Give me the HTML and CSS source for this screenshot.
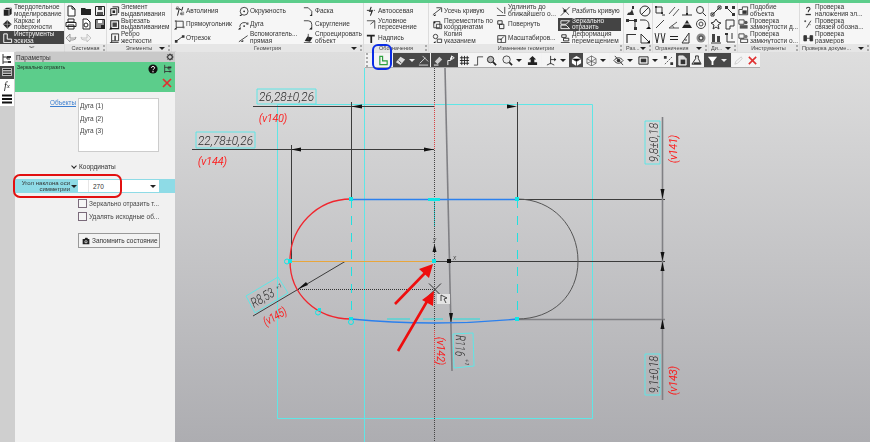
FILE: index.html
```html
<!DOCTYPE html>
<html lang="ru">
<head>
<meta charset="utf-8">
<title>Зеркально отразить</title>
<link rel="stylesheet" href="styles.css">
</head>
<body>
<svg class="defs" width="0" height="0">
  <defs>
    <g id="solid"><path d="M2 4l3-2h6v7l-3 2H2z" fill="#222"/><path d="M2 4h6v7M8 4l3-2" stroke="#fff" fill="none" stroke-width=".7"/></g>
    <g id="surf"><path d="M6 1l5 5-5 5-5-5z" fill="#222"/><path d="M1 6h10M6 1v10" stroke="#aaa" stroke-width=".8"/></g>
    <g id="sketch"><path d="M2 1v10h9V7H6V1z" fill="none" stroke="#fff" stroke-width="1.1"/></g>
    <g id="doc"><path d="M3 1h4l3 3v7H3zM7 1v3h3" fill="#fff" stroke="#222"/></g>
    <g id="folder"><path d="M1 10V3h4l1 1h5v6z" fill="#222"/></g>
    <g id="save"><path d="M1.500 1.500h9v9h-9z" fill="#eee" stroke="#222"/><path d="M4 2h4v3H4zM3 7h6v3H3z" fill="#555"/></g>
    <g id="print"><path d="M3 1h6v3H3zM1 4.500h10v4H1zM3 7h6v4H3z" fill="#fff" stroke="#222"/></g>
    <g id="docsearch"><path d="M3 1h4l3 3v7H3z" fill="#fff" stroke="#222"/><circle cx="6" cy="7" r="2" fill="none" stroke="#222"/></g>
    <g id="saveas"><path d="M1.500 1.500h9v9h-9z" fill="#888" stroke="#222"/><path d="M4 2h4v3H4z" fill="#fff"/><path d="M7 7h4v4H7z" fill="#222"/></g>
    <g id="undo"><path d="M5 2L1 6l4 4V8h3a3 3 0 0 0 3-3c-1 1-2 1-3 1H5z" fill="#e8e8e8" stroke="#888" stroke-width=".8"/></g>
    <g id="redo"><path d="M7 2l4 4-4 4V8H4a3 3 0 0 1-3-3c1 1 2 1 3 1h3z" fill="#eee" stroke="#bbb" stroke-width=".8"/></g>
    <g id="extrude"><path d="M4 1h7v7M2 3h7v7H2z" fill="none" stroke="#222" stroke-width="1.100"/><path d="M4 5h3v3H4z" fill="#222"/><path d="M0 12l3-3v3z" fill="#111"/></g>
    <g id="cut"><path d="M2 2h9v9H2z" fill="none" stroke="#222" stroke-width="1.200"/><path d="M4 4h5v5H4z" fill="#444"/><path d="M0 12l3-3v3z" fill="#111"/></g>
    <g id="rib"><path d="M3 1h8v8H3zM1 11h10M3 9v2" fill="none" stroke="#222"/><path d="M6 3v6h2V3z" fill="#555"/></g>
    <g id="autoline"><path d="M4 11l2-8 3 2 1-4M2 3h3M7 9h3" fill="none" stroke="#222" stroke-width="1.100"/><path d="M3 1h2v3H3zM8 7h3v3H8z" fill="none" stroke="#666" stroke-width=".8"/></g>
    <g id="rectg"><path d="M2.500 2.500h8v7h-8z" fill="none" stroke="#333"/><path d="M1 1.500h2v2H1zM10 8.500h2v2h-2z" fill="#666"/><path d="M0 12l3-3v3z" fill="#111"/></g>
    <g id="lineg"><path d="M3 9l7-5" stroke="#333"/><path d="M1 8h3v3H1zM9 2.500h3v3H9z" fill="#333"/></g>
    <g id="circ"><circle cx="7" cy="6" r="4.500" fill="none" stroke="#333"/><circle cx="7" cy="6" r="1" fill="#222"/><path d="M1 12l3-3v3z" fill="#111"/></g>
    <g id="arcg"><path d="M2 9a5 5 0 0 1 9-3" fill="none" stroke="#333"/><circle cx="7" cy="8" r="1" fill="#222"/><path d="M9.500 4h2.500v2.500H9.500z" fill="#666"/><path d="M0 12l3-3v3z" fill="#111"/></g>
    <g id="aux"><path d="M1 10l10-7" stroke="#333"/><path d="M3 10l3-2v2z" fill="#111"/></g>
    <g id="chamf"><path d="M1 2h5l4 4v6" fill="none" stroke="#333"/><path d="M7 12l3-3v3z" fill="#111"/></g>
    <g id="fillet"><path d="M1 2h5a4 4 0 0 1 4 4v6" fill="none" stroke="#333"/><path d="M7 12l3-3v3z" fill="#111"/></g>
    <g id="proj"><path d="M2 9l3-5 6 1-3 5z" fill="#222"/><path d="M6 1v7M1 11h9" stroke="#444"/></g>
    <g id="axis"><path d="M6 1L4 6h3l-2 5" stroke="#222" fill="none" stroke-width="1.200"/><path d="M1 5h9" stroke="#222" stroke-dasharray="3 1"/></g>
    <g id="inter"><path d="M1 2h9l-5 4M10 2v9" fill="none" stroke="#444"/></g>
    <g id="tchar"><path d="M1 2h9v2H7v8H5V4H1z" fill="#222"/></g>
    <g id="trim"><path d="M1 10l9-7M5 2h6v5" fill="none" stroke="#333"/><path d="M1 12l3-3v3z" fill="#111"/></g>
    <g id="move"><path d="M2 3h7v7H2zM5 6h6v5H5z" fill="none" stroke="#333"/><circle cx="3" cy="4" r="1" fill="#222"/></g>
    <g id="copyi"><circle cx="4" cy="4" r="2.500" fill="none" stroke="#333"/><path d="M6 7h5v4H6z" fill="none" stroke="#333"/><path d="M1 12l3-3v3z" fill="#111"/></g>
    <g id="ext"><path d="M1 2l7 6M10 1v8M1 11h10" fill="none" stroke="#333"/></g>
    <g id="rot"><path d="M2 2h5v4H2zM4 6h5v5H4z" fill="none" stroke="#222"/></g>
    <g id="scale"><path d="M2 3h9v8H2zM2 7h4v4" fill="none" stroke="#333"/><path d="M5 8l4-4" stroke="#222"/></g>
    <g id="split"><path d="M1 11L11 1M3 2l7 8" stroke="#333" fill="none"/><path d="M4 4h3v3H4z" fill="#222"/></g>
    <g id="mirror"><path d="M1 2h10L7 6H1zM1 11h10L7 7H1z" fill="none" stroke="#fff"/></g>
    <g id="deform"><path d="M2 2h5v3H2zM4 6h6v3H4z" fill="none" stroke="#222"/><path d="M1 11h10" stroke="#222"/></g>
    <g id="a1"><path d="M2 10c2-5 3 0 5-6l2 6zM7 1h2v3H7z" fill="#333"/></g>
    <g id="a2"><circle cx="6" cy="6" r="5" fill="none" stroke="#333"/><path d="M2 10l8-8" stroke="#333"/></g>
    <g id="a3"><path d="M2 2.500h8v8" fill="none" stroke="#333"/><path d="M1 1h3v3H1zM9 1h3v3H9zM9 9h3v3H9z" fill="#333"/></g>
    <g id="a4"><path d="M1 2h4c4 0 5 3 5 6" fill="none" stroke="#333"/><path d="M7 11l3-3 2 3z" fill="#111"/></g>
    <g id="a5"><path d="M2 11V2.500h9" fill="none" stroke="#333" stroke-width="1.200"/></g>
    <g id="a6"><path d="M2 2v9h9z" fill="none" stroke="#333"/><path d="M8 11l3-3v3z" fill="#111"/></g>
    <g id="c1"><path d="M2 2h6v6H2z" fill="none" stroke="#333"/><path d="M1 1h2v2H1zM7 7h2v2H7z" fill="#333"/><path d="M8 10h3" stroke="#333"/></g>
    <g id="c2"><path d="M1 9l6-7M5 11l6-7" stroke="#555"/></g>
    <g id="c3"><path d="M6 1v9M1 10h10" stroke="#333"/><path d="M5 8l2 0 0 2H5z" fill="#222"/></g>
    <g id="c4"><circle cx="5" cy="5" r="3.500" fill="none" stroke="#333"/><path d="M8 8l3 3" stroke="#333"/></g>
    <g id="c5"><path d="M2 10l8-8" stroke="#444"/></g>
    <g id="c6"><path d="M1 10h10M1 10l8-6M4 7l2 3" fill="none" stroke="#555"/></g>
    <g id="c7"><path d="M6 2l5 8H1z" fill="#222"/><path d="M3 6h6" stroke="#eee"/></g>
    <g id="c8"><circle cx="6" cy="6" r="4.500" fill="none" stroke="#444"/><circle cx="6" cy="6" r="2" fill="none" stroke="#444"/></g>
    <g id="c9"><path d="M1 1l2 10 2-10M7 1l2 10 2-10" fill="none" stroke="#333"/></g>
    <g id="c10"><path d="M2 4.500h8M2 7.500h8" stroke="#222" stroke-width="1.200"/></g>
    <g id="c11"><path d="M1 11L8 1v10zM4 8h2" fill="none" stroke="#333"/></g>
    <g id="c12"><circle cx="6" cy="6" r="4.500" fill="#888"/><circle cx="6" cy="6" r="2" fill="#eee" stroke="#333"/></g>
    <g id="d1"><path d="M2 10l8-8" stroke="#333"/><path d="M1 8h3v3H1zM8 1h3v3H8z" fill="none" stroke="#333"/></g>
    <g id="d2"><path d="M3 3l7 7" stroke="#333"/><path d="M1 1h3v3H1zM8 8h3v3H8zM8 1h3v3H8z" fill="#333"/></g>
    <g id="d3"><path d="M6 1l2 3 3 1-3 2 1 4-3-2-3 2 1-4-3-2 3-1z" fill="none" stroke="#333"/></g>
    <g id="d4"><path d="M2 2h8v6H6v3H2z" fill="none" stroke="#333"/></g>
    <g id="d5"><path d="M2 2h3v8H2zM7 4h3v6H7z" fill="#444"/><path d="M1 11h10" stroke="#333"/></g>
    <g id="d6"><path d="M3 1v9h8M8 1v6" stroke="#333" fill="none"/><path d="M1 1h3v2H1z" fill="#333"/></g>
    <g id="simil"><path d="M1 4h4V1h6v9H1z" fill="none" stroke="#333"/><path d="M5 5h5v4H5z" fill="#333"/></g>
    <g id="chk1"><path d="M1 1h6v5H1z" fill="none" stroke="#333"/><path d="M2 7h9v4H2z" fill="#555"/><circle cx="9" cy="4" r="2" fill="#555"/></g>
    <g id="chk2"><path d="M1 1h6v5H1z" fill="none" stroke="#333"/><path d="M3 7h8v4H3z" fill="none" stroke="#333"/><circle cx="9" cy="4" r="2" fill="#777"/></g>
    <g id="chkq"><path d="M4 3c0-2 4-2 4 0 0 2-2 1-2 4" fill="none" stroke="#333" stroke-width="1.200"/><path d="M3 9h6v1.500H3z" fill="#333"/></g>
    <g id="chkl"><path d="M2 2h1v1H2zM9 2l-5 8M8 6v1" stroke="#333" fill="none"/></g>
    <g id="chkr"><path d="M1 3v6h3V3zM8 3v6h3V3zM4 6h4" fill="#333" stroke="#333"/></g>
    <g id="tree"><path d="M2 1v10M2 4h4v2H9M2 9h6" fill="none" stroke="#333"/><path d="M6 3h4v2H6zM7 8h3v2H7z" fill="#333"/></g>
    <g id="treeg"><path d="M2 1.500h3v5h5v4H2z" fill="none" stroke="#2e9e3e" stroke-width="1.300"/></g>
    <g id="eraser"><path d="M1 8l5-6 5 3-5 6z" fill="#ddd"/><path d="M4 6l3 3" stroke="#444"/></g>
    <g id="dim"><path d="M2 9l6-6M5 1l6 6M1 11h10" stroke="#ddd" fill="none"/></g>
    <g id="dim2"><path d="M2 7l5-5 3 3-5 5z" fill="#ccc"/><path d="M1 11h5" stroke="#fff"/></g>
    <g id="sk2"><path d="M2 11V6h3V3h2M6 1l3 2-3 2z" fill="none" stroke="#fff"/></g>
    <g id="grid"><path d="M3 1v10M6 1v10M9 1v10M1 3h10M1 6h10M1 9h10" stroke="#222"/></g>
    <g id="step"><path d="M1 11h4V2h6" fill="none" stroke="#444"/></g>
    <g id="lens"><circle cx="5" cy="5" r="3.500" fill="#bbb" stroke="#222"/><path d="M7.500 7.500l3.500 3.500" stroke="#222" stroke-width="1.800"/></g>
    <g id="lens2"><circle cx="5" cy="5" r="4" fill="#eee" stroke="#444"/><path d="M8 8l3 3" stroke="#222" stroke-width="1.800"/></g>
    <g id="up"><path d="M6 1l4 4H8v3h3v3H1V8h3V5H2z" fill="#222"/></g>
    <g id="fig"><path d="M5 1v9M1 11l4-2 4 2M5 5h6" fill="none" stroke="#333"/><path d="M9 3l2 2-2 2z" fill="#222"/></g>
    <g id="cube"><path d="M6 1l5 3v5l-5 3-5-3V4z" fill="#fff"/><path d="M1 4l5 3 5-3M6 7v5" stroke="#444"/></g>
    <g id="wire"><path d="M6 1l5 3v5l-5 3-5-3V4zM1 4l5 3 5-3M6 7v5M6 1v6M1 9l5-2 5 2" fill="none" stroke="#444" stroke-width=".7"/></g>
    <g id="eye"><path d="M1 6c3-4 7-4 10 0-3 4-7 4-10 0z" fill="none" stroke="#333"/><circle cx="6" cy="6" r="2" fill="#333"/><path d="M2 1l9 10" stroke="#333"/></g>
    <g id="frame"><path d="M1 2h10v8H1z" fill="none" stroke="#222"/><path d="M3 4h6v4H3z" fill="#333"/></g>
    <g id="cam"><path d="M1 3h3l1-2h3l1 2h2v8H1z" fill="#222"/><circle cx="6" cy="7" r="2.300" fill="#ddd"/><circle cx="6" cy="7" r="1.100" fill="#222"/></g>
    <g id="pts"><path d="M2 10l8-8" stroke="#555" stroke-dasharray="2 1"/><path d="M1 1h3v3H1zM8 8h3v3H8z" fill="#333"/></g>
    <g id="layer2"><path d="M2 1h5l3 3v7H2z" fill="#ddd" stroke="#eee"/><path d="M4 5h5v5H4z" fill="#333"/></g>
    <g id="layer3"><path d="M5 1v3L1 10h10L8 4V1z" fill="#eee" stroke="#222"/><path d="M3 8h7v2H3z" fill="#333"/></g>
    <g id="funnel"><path d="M1 2h10L7 7v4H5V7z" fill="#fff"/></g>
    <g id="pen"><path d="M2 10l1-3 6-5 1 2-5 5z" fill="none" stroke="#ccc"/></g>
    <g id="redx"><path d="M2 2l8 8M10 2l-8 8" stroke="#e03030" stroke-width="1.700"/></g>
    <g id="gear"><circle cx="6" cy="6" r="3.500" fill="none" stroke="#333" stroke-width="1.800"/><path d="M6 .5v2M6 9.500v2M.5 6h2M9.500 6h2M2 2l1.500 1.500M8.500 8.500L10 10M2 10l1.500-1.500M8.500 3.500L10 2" stroke="#333"/></g>
    <g id="help"><circle cx="6" cy="6" r="5.500" fill="#111"/><path d="M4 4.500c0-2 4-2 4 0 0 1.500-2 1.300-2 3" fill="none" stroke="#fff" stroke-width="1.200"/><circle cx="6" cy="9.300" r=".8" fill="#fff"/></g>
    <g id="list"><path d="M1 2h10v8H1z" fill="#bbb"/><path d="M2 3.500h8M2 6h8M2 8.500h8" stroke="#222"/></g>
    <g id="burger"><path d="M1 2.500h10M1 6h10M1 9.500h10" stroke="#111" stroke-width="1.800"/></g>
  </defs>
</svg>

<div class="app">
  <div class="topline"></div>
  <header class="ribbon">
    <section class="group g-mode">
      <div class="grp-body one">
        <div class="item"><svg class="ic" viewBox="0 0 12 12"><use href="#solid"/></svg><span>Твердотельное<br>моделирование</span></div>
        <div class="item"><svg class="ic" viewBox="0 0 12 12"><use href="#surf"/></svg><span>Каркас и<br>поверхности</span></div>
        <div class="item dark"><svg class="ic" viewBox="0 0 12 12"><use href="#sketch"/></svg><span>Инструменты<br>эскиза</span></div>
      </div>
      <div class="grp-label">︾</div>
    </section>
    <section class="group g-sys">
      <div class="grp-body icons three">
        <svg class="ic" viewBox="0 0 12 12"><use href="#doc"/></svg><svg class="ic" viewBox="0 0 12 12"><use href="#folder"/></svg><svg class="ic" viewBox="0 0 12 12"><use href="#save"/></svg>
        <svg class="ic" viewBox="0 0 12 12"><use href="#print"/></svg><svg class="ic" viewBox="0 0 12 12"><use href="#docsearch"/></svg><svg class="ic" viewBox="0 0 12 12"><use href="#saveas"/></svg>
        <svg class="ic" viewBox="0 0 12 12"><use href="#undo"/></svg><svg class="ic" viewBox="0 0 12 12"><use href="#redo"/></svg>
      </div>
      <div class="grp-label">Системная<i class="grip"></i></div>
    </section>
    <section class="group g-el">
      <div class="grp-body one">
        <div class="item"><svg class="ic" viewBox="0 0 12 12"><use href="#extrude"/></svg><span>Элемент<br>выдавливания</span></div>
        <div class="item"><svg class="ic" viewBox="0 0 12 12"><use href="#cut"/></svg><span>Вырезать<br>выдавливанием</span></div>
        <div class="item"><svg class="ic" viewBox="0 0 12 12"><use href="#rib"/></svg><span>Ребро<br>жесткости</span></div>
      </div>
      <div class="grp-label">Элементы<i class="tri"></i><i class="grip"></i></div>
    </section>
    <section class="group g-geo">
      <div class="grp-body cols">
        <div class="item"><svg class="ic" viewBox="0 0 12 12"><use href="#autoline"/></svg><span>Автолиния</span></div>
        <div class="item"><svg class="ic" viewBox="0 0 12 12"><use href="#rectg"/></svg><span>Прямоугольник</span></div>
        <div class="item"><svg class="ic" viewBox="0 0 12 12"><use href="#lineg"/></svg><span>Отрезок</span></div>
        <div class="item"><svg class="ic" viewBox="0 0 12 12"><use href="#circ"/></svg><span>Окружность</span></div>
        <div class="item"><svg class="ic" viewBox="0 0 12 12"><use href="#arcg"/></svg><span>Дуга</span></div>
        <div class="item"><svg class="ic" viewBox="0 0 12 12"><use href="#aux"/></svg><span>Вспомогатель...<br>прямая</span></div>
        <div class="item"><svg class="ic" viewBox="0 0 12 12"><use href="#chamf"/></svg><span>Фаска</span></div>
        <div class="item"><svg class="ic" viewBox="0 0 12 12"><use href="#fillet"/></svg><span>Скругление</span></div>
        <div class="item"><svg class="ic" viewBox="0 0 12 12"><use href="#proj"/></svg><span>Спроецировать<br>объект</span></div>
      </div>
      <div class="grp-label">Геометрия<i class="tri"></i><i class="grip"></i></div>
    </section>
    <section class="group g-note">
      <div class="grp-body one">
        <div class="item"><svg class="ic" viewBox="0 0 12 12"><use href="#axis"/></svg><span>Автоосевая</span></div>
        <div class="item"><svg class="ic" viewBox="0 0 12 12"><use href="#inter"/></svg><span>Условное<br>пересечение</span></div>
        <div class="item"><svg class="ic" viewBox="0 0 12 12"><use href="#tchar"/></svg><span>Надпись</span></div>
      </div>
      <div class="grp-label">Обозначения<i class="grip"></i></div>
    </section>
    <section class="group g-mod">
      <div class="grp-body cols">
        <div class="item"><svg class="ic" viewBox="0 0 12 12"><use href="#trim"/></svg><span>Усечь кривую</span></div>
        <div class="item"><svg class="ic" viewBox="0 0 12 12"><use href="#move"/></svg><span>Переместить по<br>координатам</span></div>
        <div class="item"><svg class="ic" viewBox="0 0 12 12"><use href="#copyi"/></svg><span>Копия<br>указанием</span></div>
        <div class="item"><svg class="ic" viewBox="0 0 12 12"><use href="#ext"/></svg><span>Удлинить до<br>ближайшего о...</span></div>
        <div class="item"><svg class="ic" viewBox="0 0 12 12"><use href="#rot"/></svg><span>Повернуть</span></div>
        <div class="item"><svg class="ic" viewBox="0 0 12 12"><use href="#scale"/></svg><span>Масштабиров...</span></div>
        <div class="item"><svg class="ic" viewBox="0 0 12 12"><use href="#split"/></svg><span>Разбить кривую</span></div>
        <div class="item dark"><svg class="ic" viewBox="0 0 12 12"><use href="#mirror"/></svg><span>Зеркально<br>отразить</span></div>
        <div class="item"><svg class="ic" viewBox="0 0 12 12"><use href="#deform"/></svg><span>Деформация<br>перемещением</span></div>
      </div>
      <div class="grp-label">Изменение геометрии<i class="grip"></i></div>
    </section>
    <section class="group g-raz">
      <div class="grp-body icons two">
        <svg class="ic" viewBox="0 0 12 12"><use href="#a1"/></svg><svg class="ic" viewBox="0 0 12 12"><use href="#a2"/></svg>
        <svg class="ic" viewBox="0 0 12 12"><use href="#a3"/></svg><svg class="ic" viewBox="0 0 12 12"><use href="#a4"/></svg>
        <svg class="ic" viewBox="0 0 12 12"><use href="#a5"/></svg><svg class="ic" viewBox="0 0 12 12"><use href="#a6"/></svg>
      </div>
      <div class="grp-label lbl-left">Раз...<i class="tri"></i><i class="grip"></i></div>
    </section>
    <section class="group g-con">
      <div class="grp-body icons four">
        <svg class="ic" viewBox="0 0 12 12"><use href="#c1"/></svg><svg class="ic" viewBox="0 0 12 12"><use href="#c2"/></svg><svg class="ic" viewBox="0 0 12 12"><use href="#c3"/></svg><svg class="ic" viewBox="0 0 12 12"><use href="#c4"/></svg>
        <svg class="ic" viewBox="0 0 12 12"><use href="#c5"/></svg><svg class="ic" viewBox="0 0 12 12"><use href="#c6"/></svg><svg class="ic" viewBox="0 0 12 12"><use href="#c7"/></svg><svg class="ic" viewBox="0 0 12 12"><use href="#c8"/></svg>
        <svg class="ic" viewBox="0 0 12 12"><use href="#c9"/></svg><svg class="ic" viewBox="0 0 12 12"><use href="#c10"/></svg><svg class="ic" viewBox="0 0 12 12"><use href="#c11"/></svg><svg class="ic" viewBox="0 0 12 12"><use href="#c12"/></svg>
      </div>
      <div class="grp-label lbl-left">Ограничения<i class="tri"></i><i class="grip"></i></div>
    </section>
    <section class="group g-di">
      <div class="grp-body icons two">
        <svg class="ic" viewBox="0 0 12 12"><use href="#d1"/></svg><svg class="ic" viewBox="0 0 12 12"><use href="#d2"/></svg>
        <svg class="ic" viewBox="0 0 12 12"><use href="#d3"/></svg><svg class="ic" viewBox="0 0 12 12"><use href="#d4"/></svg>
        <svg class="ic" viewBox="0 0 12 12"><use href="#d5"/></svg><svg class="ic" viewBox="0 0 12 12"><use href="#d6"/></svg>
      </div>
      <div class="grp-label lbl-left">Ди...<i class="tri"></i><i class="grip"></i></div>
    </section>
    <section class="group g-tool">
      <div class="grp-body one">
        <div class="item"><svg class="ic" viewBox="0 0 12 12"><use href="#simil"/></svg><span>Подобие<br>объекта</span></div>
        <div class="item"><svg class="ic" viewBox="0 0 12 12"><use href="#chk1"/></svg><span>Проверка<br>замкнутости д...</span></div>
        <div class="item"><svg class="ic" viewBox="0 0 12 12"><use href="#chk2"/></svg><span>Проверка<br>замкнутости о...</span></div>
      </div>
      <div class="grp-label">Инструменты<i class="grip"></i></div>
    </section>
    <section class="group g-check">
      <div class="grp-body one">
        <div class="item"><svg class="ic" viewBox="0 0 12 12"><use href="#chkq"/></svg><span>Проверка<br>наложения эл...</span></div>
        <div class="item"><svg class="ic" viewBox="0 0 12 12"><use href="#chkl"/></svg><span>Проверка<br>связей обозна...</span></div>
        <div class="item"><svg class="ic" viewBox="0 0 12 12"><use href="#chkr"/></svg><span>Проверка<br>размеров</span></div>
      </div>
      <div class="grp-label lbl-left">Проверка докуме...<i class="tri"></i><i class="grip"></i></div>
    </section>
  </header>

  <main class="main">
    <nav class="tabs">
      <div class="tab"><svg class="ic" viewBox="0 0 12 12"><use href="#tree"/></svg></div>
      <div class="tab on"><svg class="ic" viewBox="0 0 12 12"><use href="#list"/></svg></div>
      <div class="tab fx">f<sub>x</sub></div>
      <div class="tab"><svg class="ic" viewBox="0 0 12 12"><use href="#burger"/></svg></div>
    </nav>
    <aside class="panel">
      <div class="panel-head"><span>Параметры</span><svg class="ic-s" viewBox="0 0 12 12"><use href="#gear"/></svg></div>
      <div class="panel-green">
        <span class="pg-title">Зеркально отразить</span>
        <div class="pg-tools">
          <div class="pg-row"><svg class="ic" viewBox="0 0 12 12"><use href="#help"/></svg><svg class="ic" viewBox="0 0 12 12"><use href="#tree"/></svg></div>
          <svg class="ic pg-x" viewBox="0 0 12 12"><use href="#redx"/></svg>
        </div>
      </div>
      <div class="objects">
        <a class="obj-link">Объекты</a>
        <div class="obj-list"><div>Дуга (1)</div><div>Дуга (2)</div><div>Дуга (3)</div></div>
      </div>
      <div class="coord-head"><i class="chev"></i>Координаты</div>
      <div class="angle-row">
        <div class="angle-label"><span>Угол наклона оси симметрии</span><i class="tri"></i></div>
        <div class="angle-input"><b class="ai-pad"></b><span>270</span><i class="tri"></i></div>
      </div>
      <label class="check"><i class="box"></i>Зеркально отразить т...</label>
      <label class="check"><i class="box"></i>Удалять исходные об...</label>
      <div class="save-btn"><svg class="ic-s" viewBox="0 0 12 12"><use href="#cam"/></svg>Запомнить состояние</div>
      <div class="red-outline"></div>
    </aside>
    <section class="canvas">
      <svg class="drawing" viewBox="175 52 695 390">
        <g class="cy" fill="none">
          <path d="M277.500 104.500H592.500V418.500H277.500z"/>
          <path d="M364.500 68V442"/>
          <path d="M257 89h59v15h-59zM196 132h59v16h-59zM645 121h15v43h-15zM645 354h15v41h-15z"/>
          <path d="M246 296l32-19 10 16-33 20zM453 334l20-1 1 33-20 2z"/>
          <path class="dash" d="M351.500 199V319M517.500 199V319"/>
          <path class="dash2" d="M387 319h23M423 319h20M453 319h27"/>
          <path class="dash3" d="M434.500 199V226"/>
        </g>
        <g class="dk" fill="none">
          <path d="M253 106.500H434M351.500 102V199M517.500 102V199"/>
          <path d="M192 149.500H434M291.500 145V261"/>
          <path d="M517 199.500H665M434 261.500H665"/>
          <path class="thick" d="M517 319.500H665M662.500 117V400"/>
          <path class="thick" d="M445 68L452 371"/>
          <path d="M345 261.500L253 316"/>
        </g>
        <path class="cline" d="M434.500 68V102M434.500 150V442"/>
        <path class="cred" d="M434.500 102V150M434.500 330V368"/>
        <path class="dotted" d="M298 289.500H434"/>
        <g fill="#111">
          <path d="M351 106.500l11-2v4zM517 106.500l-10-2v4zM291 149.500l10-2v4zM434 149.500l-10-2v4z"/>
          <path d="M662.500 199l-2-10h4zM662.500 261l-2-9h4zM662.500 262l-2 9h4zM662.500 319l-2 10h4z"/>
          <path d="M451 323l-2-10h4zM298 289l8-7 2 3zM434.500 244l-2 8h4zM447 259h4v4h-4z"/>
        </g>
        <path class="shape-gray" d="M517 199C553 199 578 227 578 261C578 295 553 319 517 319"/>
        <path class="shape-red" d="M351 199C317 199 290 227 290 261C290 295 317 319 351 319"/>
        <path class="shape-blue" d="M351 199.500H517M351 319Q434 327 517 319"/>
        <path class="orange" d="M290 261.500H433"/>
        <g class="cy-pt">
          <rect x="349" y="197" width="4" height="4"/><rect x="515" y="197" width="4" height="4"/><rect x="515" y="317" width="4" height="4"/><rect x="432" y="259" width="4" height="4"/><rect x="428" y="198" width="12" height="3"/>
          <rect x="288" y="259" width="4" height="4"/><rect x="349" y="317" width="4" height="3"/><rect x="318" y="308" width="3" height="3"/>
        </g>
        <g class="cy-ring"><circle cx="287" cy="261.500" r="2.500"/><circle cx="351" cy="322" r="2.500"/><circle cx="318" cy="312.500" r="2.500"/></g>
        <path class="cross" d="M429 283.500l12 12M441 283.500l-12 12"/>
        <g class="cursor"><rect x="437" y="294" width="13" height="10"/><path d="M441 295l6 3-3 1 2 4M441 295v6"/></g>
        <text class="t dim" x="259" y="101" textLength="55" lengthAdjust="spacingAndGlyphs">26,28±0,26</text>
        <text class="t red" x="259" y="122" textLength="28" lengthAdjust="spacingAndGlyphs">(v140)</text>
        <text class="t dim" x="198" y="145" textLength="55" lengthAdjust="spacingAndGlyphs">22,78±0,26</text>
        <text class="t red" x="198" y="165" textLength="29" lengthAdjust="spacingAndGlyphs">(v144)</text>
        <text class="t dim" transform="translate(658 162) rotate(-90)" textLength="39" lengthAdjust="spacingAndGlyphs">9,8±0,18</text>
        <text class="t red" transform="translate(677 163) rotate(-90)" textLength="28" lengthAdjust="spacingAndGlyphs">(v141)</text>
        <text class="t dim" transform="translate(658 393) rotate(-90)" textLength="37" lengthAdjust="spacingAndGlyphs">9,1±0,18</text>
        <text class="t red" transform="translate(677 395) rotate(-90)" textLength="29" lengthAdjust="spacingAndGlyphs">(v143)</text>
        <text class="t dim" transform="translate(456 335) rotate(92)" textLength="21" lengthAdjust="spacingAndGlyphs">R116</text>
        <text class="t sup" transform="translate(465 359) rotate(92)">+1</text>
        <text class="t red" transform="translate(437 337) rotate(90)" textLength="28" lengthAdjust="spacingAndGlyphs">(v142)</text>
        <text class="t dim" transform="translate(254 308) rotate(-30)" textLength="25" lengthAdjust="spacingAndGlyphs">R8,53</text>
        <text class="t sup" transform="translate(277 290) rotate(-30)">+1</text>
        <text class="t red" transform="translate(266 326) rotate(-30)" textLength="25" lengthAdjust="spacingAndGlyphs">(v145)</text>
        <text class="t axis" x="433" y="242">y</text>
        <text class="t axis" x="453" y="260">x</text>
        <path class="red-arrow" d="M395 304L426 272M398 351L429 298"/>
        <path fill="#ee0e0e" d="M433 264l-4 14-10-9zM434 291l-1 15-11-6z"/>
      </svg>
      <div class="toolbar">
        <div class="handle"></div>
        <div class="tb w20"><svg class="ic" viewBox="0 0 12 12"><use href="#treeg"/></svg></div>
        <div class="tb w24 dk-btn"><svg class="ic" viewBox="0 0 12 12"><use href="#eraser"/></svg><i class="tri w"></i></div>
        <div class="tb dk-btn mr"><svg class="ic" viewBox="0 0 12 12"><use href="#dim"/></svg></div>
        <div class="tb dk-btn"><svg class="ic" viewBox="0 0 12 12"><use href="#dim2"/></svg></div>
        <div class="tb dk-btn"><svg class="ic" viewBox="0 0 12 12"><use href="#sk2"/></svg></div>
        <div class="tb"><svg class="ic" viewBox="0 0 12 12"><use href="#grid"/></svg></div>
        <div class="tb"><svg class="ic" viewBox="0 0 12 12"><use href="#step"/></svg></div>
        <div class="tb mr"><svg class="ic" viewBox="0 0 12 12"><use href="#lens"/></svg></div>
        <div class="tb w25"><svg class="ic" viewBox="0 0 12 12"><use href="#lens2"/></svg><i class="tri"></i></div>
        <div class="tb w17 mr"><svg class="ic" viewBox="0 0 12 12"><use href="#up"/></svg></div>
        <div class="tb w27"><svg class="ic" viewBox="0 0 12 12"><use href="#fig"/></svg><i class="tri"></i></div>
        <div class="tb dk-btn"><svg class="ic" viewBox="0 0 12 12"><use href="#cube"/></svg></div>
        <div class="tb w26 mr"><svg class="ic" viewBox="0 0 12 12"><use href="#wire"/></svg><i class="tri"></i></div>
        <div class="tb w26"><svg class="ic" viewBox="0 0 12 12"><use href="#eye"/></svg><i class="tri"></i></div>
        <div class="tb w25 mr"><svg class="ic" viewBox="0 0 12 12"><use href="#frame"/></svg><i class="tri"></i></div>
        <div class="tb mr"><svg class="ic" viewBox="0 0 12 12"><use href="#pts"/></svg></div>
        <div class="tb dk-btn"><svg class="ic" viewBox="0 0 12 12"><use href="#layer2"/></svg></div>
        <div class="tb mr"><svg class="ic" viewBox="0 0 12 12"><use href="#layer3"/></svg></div>
        <div class="tb w27 dk-btn mr"><svg class="ic" viewBox="0 0 12 12"><use href="#funnel"/></svg><i class="tri w"></i></div>
        <div class="tb mr"><svg class="ic" viewBox="0 0 12 12"><use href="#pen"/></svg></div>
        <div class="tb"><svg class="ic" viewBox="0 0 12 12"><use href="#redx"/></svg></div>
      </div>
      <div class="blue-outline"></div>
    </section>
  </main>
</div>
</body>
</html>
```

FILE: styles.css
```css
* { box-sizing: border-box; }
html, body { margin: 0; padding: 0; }
body {
  width: 870px;
  height: 442px;
  overflow: hidden;
  font-family: "Liberation Sans", Arial, sans-serif;
  font-size: 6.500px;
  color: #333;
  background: #ccc;
}
.defs { position: absolute; }
.app { width: 870px; height: 442px; display: flex; flex-direction: column; }
.topline { height: 3px; background: #5ccd8b; flex: none; }

/* ribbon */
.ribbon { height: 49px; flex: none; display: flex; background: #f6f6f6; }
.group { display: flex; flex-direction: column; border-right: 1px solid #dcdcdc; filter: blur(.4px); }
.grp-body { height: 41px; padding-top: 1px; flex: none; }
.grp-body.one { display: grid; grid-template-rows: repeat(3, 13.500px); }
.grp-body.cols { display: grid; grid-template-rows: repeat(3, 13.500px); grid-auto-flow: column; }
.grp-body.icons { display: grid; grid-template-rows: repeat(3, 13.500px); justify-items: center; align-items: center; }
.icons.two { grid-template-columns: repeat(2, 14px); justify-content: center; }
.icons.three { grid-template-columns: repeat(3, 14.500px); justify-content: center; }
.icons.four { grid-template-columns: repeat(4, 13.500px); justify-content: center; }
.grp-label {
  height: 8px; background: #e6e6e6; font-size: 5.500px; line-height: 8px;
  text-align: center; color: #444; position: relative; white-space: nowrap; overflow: hidden;
}
.lbl-left { text-align: left; padding-left: 2px; }
.grip { position: absolute; right: 1px; top: 1px; width: 2px; height: 6px; border-left: 2px dotted #aaa; }
.grp-label .tri { position: absolute; right: 6px; top: 3px; }

.g-mode { width: 65px; }
.g-sys { width: 42px; }
.g-el { width: 65px; }
.g-geo { width: 192px; }
.g-geo .cols { grid-template-columns: 64px 65px 62px; }
.g-note { width: 65px; }
.g-mod { width: 195px; }
.g-mod .cols { grid-template-columns: 64px 64px 63px; padding-left: 1px; }
.g-raz { width: 29px; }
.g-con { width: 56px; }
.g-di { width: 29px; }
.g-tool { width: 62px; }
.g-check { width: 70px; border-right: 0; }

.item { display: flex; align-items: center; padding-left: 2px; line-height: 6.500px; color: #333; }
.item .ic { width: 10.500px; height: 10.500px; margin-right: 1.500px; }
.item span { display: block; white-space: nowrap; }
.item.dark { background: #444; color: #f4f4f4; }
.g-tool .item { padding-left: 0; }
.g-check .item { padding-left: 3px; }
.ic { width: 12px; height: 12px; flex: none; display: block; }
.ic-s { width: 8px; height: 8px; flex: none; display: block; }
.tri { display: inline-block; width: 0; height: 0; border-left: 3px solid transparent; border-right: 3px solid transparent; border-top: 3px solid #222; }
.tri.w { border-top-color: #eee; }

/* main */
.main { flex: 1; display: flex; position: relative; min-height: 0; }
.tabs { width: 15px; flex: none; background: #cfcfcf; display: flex; flex-direction: column; }
.tab { height: 13.500px; width: 14px; background: #fff; display: flex; align-items: center; justify-content: center; filter: blur(.3px); }
.tab.on { background: #474747; }
.tab.fx { font: italic 10px "Liberation Serif", serif; color: #222; }
.tab.fx sub { font-size: 7px; vertical-align: -2px; }

/* panel */
.panel { width: 160px; flex: none; background: #f1f1f1; position: relative; box-shadow: 1px 0 1px #999; }
.panel-head { height: 10px; background: #c9c9c9; display: flex; align-items: center; justify-content: space-between; padding: 0 1px; font-size: 6.500px; color: #333; filter: blur(.3px); }
.panel-green { height: 30px; background: #5ccd8b; display: flex; justify-content: space-between; padding: 2px 2px; font-size: 5.200px; color: #1e2a22; }
.pg-title { filter: blur(.25px); }
.pg-tools { display: flex; flex-direction: column; align-items: flex-end; gap: 3px; }
.pg-row { display: flex; gap: 3px; }
.pg-row .ic { width: 10px; height: 10px; }
.pg-row .ic + .ic { margin-left: 2px; }

.objects { display: flex; padding-top: 6px; height: 60px; }
.obj-link { width: 61px; text-align: right; padding-top: 1px; color: #3c7fd0; text-decoration: underline; font-size: 6.300px; filter: blur(.25px); }
.obj-list { margin-left: 2px; width: 81px; height: 54px; background: #fff; border: 1px solid #ccc; padding: 1px 1px; font-size: 6.500px; line-height: 12.500px; color: #444; filter: blur(.2px); }
.coord-head { height: 27px; padding: 11px 0 0 57px; font-size: 6.500px; display: flex; align-items: flex-start; gap: 3px; filter: blur(.2px); }
.chev { width: 4px; height: 4px; border-right: 1px solid #222; border-bottom: 1px solid #222; transform: rotate(45deg); margin-top: 1px; }
.angle-row { height: 14px; background: #8edbe6; display: flex; align-items: center; }
.angle-label { width: 62px; display: flex; align-items: center; justify-content: flex-end; gap: 1px; text-align: right; font-size: 6px; line-height: 6.500px; color: #333; filter: blur(.2px); }
.angle-label span { flex: 1; }
.angle-input { margin-left: 1px; width: 81px; height: 12px; background: #fff; display: flex; align-items: center; font-size: 6.500px; color: #333; }
.ai-pad { width: 11px; height: 12px; border-right: 1px solid #e6e6e6; margin-right: 4px; }
.angle-input .tri { margin-left: auto; margin-right: 3px; }
.check { display: flex; align-items: center; gap: 2px; padding-left: 63px; margin-top: 6px; height: 9px; font-size: 6.500px; color: #444; white-space: nowrap; filter: blur(.2px); }
.check + .check { margin-top: 4px; }
.box { width: 9px; height: 9px; border: 1px solid #7a6a7a; background: #f5f5f5; flex: none; }
.save-btn { margin: 12px 0 0 63px; width: 82px; height: 15px; border: 1px solid #999; background: #f3f3f3; display: flex; align-items: center; gap: 2px; padding-left: 3px; font-size: 6.500px; color: #333; white-space: nowrap; filter: blur(.2px); }
.red-outline { position: absolute; left: -2px; top: 122px; width: 109px; height: 24px; border: 2px solid #e21010; border-radius: 7px; }

/* canvas */
.canvas { flex: 1; position: relative; background: linear-gradient(#dedede, #adadb1); }
.drawing { position: absolute; left: 0; top: 0; width: 695px; height: 390px; display: block; filter: blur(.25px); }
.cy path { stroke: #5fe6e6; stroke-width: 1; }
.cy path.dash { stroke: #22e0e0; stroke-dasharray: 9 8; }
.cy path.dash2 { stroke: #22e0e0; stroke-width: 1.200; }
.cy path.dash3 { stroke: #22e0e0; stroke-dasharray: 1 1; }
.dk path { stroke: #3c3c3c; stroke-width: 1; }
.dk path.thick { stroke: #808084; stroke-width: 1.600; }
.cline { stroke: #444; stroke-width: 1; stroke-dasharray: 1 1; fill: none; }
.cred { stroke: #d64040; stroke-width: 1; stroke-dasharray: 1 1; fill: none; }
.dotted { stroke: #333; stroke-width: 1; stroke-dasharray: 1 1; fill: none; }
.shape-gray { stroke: #555; stroke-width: 1; fill: none; }
.shape-red { stroke: #f0262e; stroke-width: 1.300; fill: none; }
.shape-blue { stroke: #2b80ee; stroke-width: 1.300; fill: none; }
.orange { stroke: #e8a63c; stroke-width: 1; fill: none; }
.cy-pt rect { fill: #0fe6e6; }
.cy-ring circle { fill: none; stroke: #0fe6e6; stroke-width: 1; }
.cross { stroke: #333; stroke-width: 1; fill: none; }
.cursor rect { fill: #e4e4e4; }
.cursor path { stroke: #222; stroke-width: .8; fill: none; }
.t { font-family: Roboto, "Liberation Sans", sans-serif; font-style: italic; font-weight: 300; }
.t.dim { font-size: 13.500px; fill: #2a2a2a; }
.t.red { font-size: 11.500px; fill: #ff1414; stroke: #ff1414; stroke-width: .2px; }
.t.sup { font-size: 6px; fill: #222; }
.t.axis { font-size: 7px; fill: #333; }
.red-arrow { stroke: #ee0e0e; stroke-width: 2.600; fill: none; }

.toolbar { position: absolute; left: 190px; top: 1px; height: 14px; display: flex; background: #f2f2f2; box-shadow: 0 1px 0 #aaa; filter: blur(.25px); }
.handle { width: 7px; border-left: 2px dotted #aaa; margin-left: 1px; }
.tb { width: 13.400px; height: 14px; display: flex; align-items: center; justify-content: center; gap: 3px; background: #f4f4f4; }
.tb .ic { width: 11px; height: 11px; }
.tb.mr { margin-right: 1px; }
.dk-btn { background: #484848; }
.w17 { width: 17px; }
.w20 { width: 20px; }
.w24 { width: 24px; }
.w25 { width: 25px; }
.w26 { width: 26px; }
.w27 { width: 27px; }
.blue-outline { position: absolute; left: 197px; top: -8px; width: 20px; height: 26px; border: 2.500px solid #0a2ce6; border-radius: 6px; }
```
